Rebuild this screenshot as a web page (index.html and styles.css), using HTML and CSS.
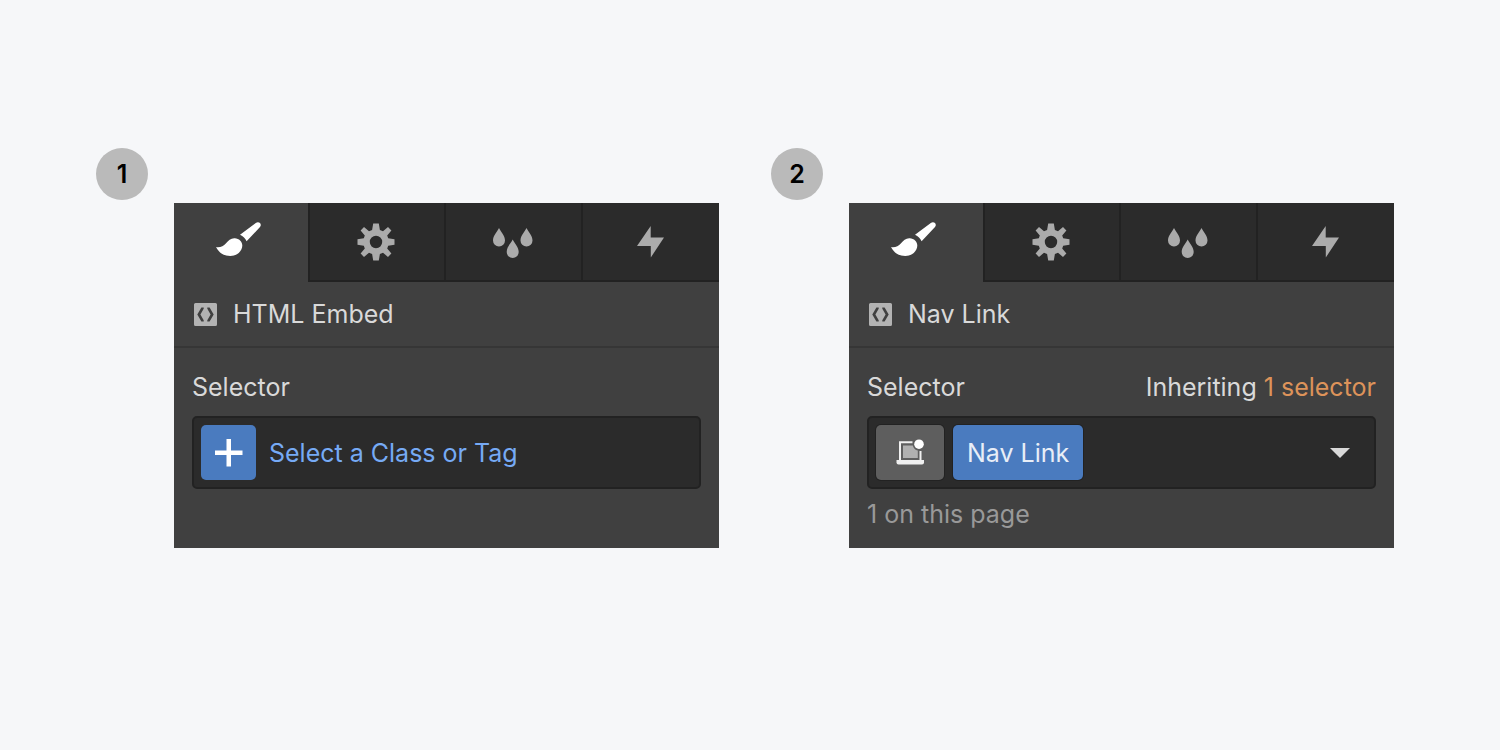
FILE: index.html
```html
<!DOCTYPE html>
<html lang="en">
<head>
<meta charset="utf-8">
<title>Style panel selectors</title>
<link rel="stylesheet" href="styles.css">
</head>
<body>
<svg class="sprite" aria-hidden="true">
  <symbol id="brush" viewBox="0 0 46 36">
    <path d="M1 25c4 .8 7.500-1 9.800-3.600 2.700-3 5.200-5.500 9-5.200 4.200.2 7.500 3.200 7.500 7.200 0 5.700-5.500 10.600-12 10.600-6.200 0-11.500-3.200-14.300-9z"/>
    <path d="M25 12.700 40.800 1c1.400-1.200 3.100-1.100 4.200.1 1.100 1.200 1 2.700 0 4L31.600 19.200c-1.300-2.900-3.400-5.100-6.600-6.500z"/>
  </symbol>
  <symbol id="gear" viewBox="-19 -19 38 38">
    <path fill-rule="evenodd" d="M-2.800-18.500h5.600L3.900-12 7-10.800l5-4.100 3.400 3.400-4.200 5L12.200-3.700l6.300.9v5.600l-6.300.9-1 2.800 4.200 5-3.400 3.400-5-4.100-3.100 1.200-1.100 6.500h-5.600l-1.100-6.500L-7 10.800l-5 4.100-3.400-3.400 4.200-5-1-2.800-6.300-.9v-5.600l6.300-.9 1-2.800-4.200-5 3.400-3.400 5 4.100 3.100-1.200zM6.200 0A6.200 6.200 0 1 0-6.200 0 6.200 6.200 0 1 0 6.200 0z"/>
  </symbol>
  <symbol id="drops" viewBox="0 -3 40 34">
    <path d="M6 0c2 4 6 7.500 6 12.500A6 6 0 0 1 0 12.500C0 7.500 4 4 6 0z"/>
    <path d="M33.500 0c2 4 6 7.500 6 12.500a6 6 0 0 1-12 0c0-5 4-8.500 6-12.500z"/>
    <path d="M19.700 11.500c2 4 6 7.500 6 12.500a6 6 0 0 1-12 0c0-5 4-8.500 6-12.500z"/>
  </symbol>
  <symbol id="bolt" viewBox="-1 -1 28 33">
    <path d="M13.700 0v11.500H27L13.800 31.500V20H0z"/>
  </symbol>
  <symbol id="embed" viewBox="0 0 23 23">
    <path fill-rule="evenodd" d="M1.500 0h20A1.500 1.500 0 0 1 23 1.500v20a1.500 1.500 0 0 1-1.500 1.500h-20A1.500 1.500 0 0 1 0 21.500v-20A1.500 1.500 0 0 1 1.500 0zM7.400 4.500 3.300 11.500l4.100 7h2.300v-1.300L6.400 11.500l3.300-5.700V4.500zM15.600 4.500h-2.300v1.300l3.300 5.700-3.300 5.700v1.300h2.300l4.100-7z"/>
  </symbol>
</svg>

<main class="board">
  <section class="step">
    <span class="badge">1</span>
    <div class="panel">
      <nav class="tabs">
        <button class="tab tab-active" aria-label="Style"><svg class="icon-brush"><use href="#brush"/></svg></button>
        <button class="tab" aria-label="Settings"><svg class="icon-gear"><use href="#gear"/></svg></button>
        <button class="tab" aria-label="Style manager"><svg class="icon-drops"><use href="#drops"/></svg></button>
        <button class="tab" aria-label="Interactions"><svg class="icon-bolt"><use href="#bolt"/></svg></button>
      </nav>
      <header class="element"><svg class="icon-embed"><use href="#embed"/></svg>HTML Embed</header>
      <div class="body">
        <div class="row"><label for="selector">Selector</label></div>
        <div class="field">
          <button class="add" aria-label="Add class"><svg class="icon-plus" viewBox="0 0 28 28"><path d="M0 11.500h11.500V0h4.500v11.500H27.500v4.500H16V27.500h-4.500V16H0z"/></svg></button>
          <input class="search" id="selector" type="text" placeholder="Select a Class or Tag">
        </div>
      </div>
    </div>
  </section>

  <section class="step">
    <span class="badge">2</span>
    <div class="panel">
      <nav class="tabs">
        <button class="tab tab-active" aria-label="Style"><svg class="icon-brush"><use href="#brush"/></svg></button>
        <button class="tab" aria-label="Settings"><svg class="icon-gear"><use href="#gear"/></svg></button>
        <button class="tab" aria-label="Style manager"><svg class="icon-drops"><use href="#drops"/></svg></button>
        <button class="tab" aria-label="Interactions"><svg class="icon-bolt"><use href="#bolt"/></svg></button>
      </nav>
      <header class="element"><svg class="icon-embed"><use href="#embed"/></svg>Nav Link</header>
      <div class="body">
        <div class="row"><span>Selector</span><span class="inherit">Inheriting <a class="inherit-link" href="#">1 selector</a></span></div>
        <div class="field">
          <button class="state" aria-label="Breakpoint"><svg class="icon-device" viewBox="0 0 28 28">
            <path class="screen" d="M7 6.500h9.800c.6 2.700 2.400 4.500 5 5V19H7z"/>
            <path class="frame" d="M16.500 3.200H4V21M24.500 12V21"/>
            <path class="base" d="M.5 21h27.500V23.500a2 2 0 0 1-2 2H2.500a2 2 0 0 1-2-2z"/>
            <circle class="dot" cx="23" cy="5.200" r="4.800"/>
          </svg></button>
          <button class="chip">Nav Link</button>
          <button class="toggle" aria-label="States"><svg class="icon-caret" viewBox="0 0 20 10"><path d="M0 0h20L10 10z"/></svg></button>
        </div>
        <p class="note">1 on this page</p>
      </div>
    </div>
  </section>
</main>
</body>
</html>
```
FILE: styles.css
```css
* { box-sizing: border-box; }

body {
  margin: 0;
  background: #f6f7f9;
  color: #d9d9d9;
  font: 400 25px/32px Inter, "Liberation Sans", sans-serif;
}

button, input { margin: 0; padding: 0; border: 0; font: inherit; color: inherit; }
svg { display: block; flex: none; fill: currentColor; }
.sprite { position: absolute; width: 0; height: 0; }

.board {
  display: grid;
  grid-template-columns: 1fr 1fr;
  gap: 52px;
  padding: 148px 106px 148px 96px;
}

.step { display: flex; flex-direction: column; gap: 3px; }

.badge {
  display: grid;
  place-items: center;
  width: 52px;
  height: 52px;
  border-radius: 50%;
  background: #bababa;
  color: #000;
  font-weight: 600;
}

.panel {
  flex: 1;
  margin-left: 78px;
  background: #404040;
}

.tabs { display: grid; grid-template-columns: 134fr 136fr 136fr 138fr; }

.tab {
  display: grid;
  place-items: center;
  height: 79px;
  padding-right: 2px;
  border-left: 2px solid #222;
  border-bottom: 2px solid #222;
  background: #2b2b2b;
  color: #ababab;
}

.tab-active {
  padding: 0 6px 6px 0;
  border: 0;
  background: #404040;
  color: #fff;
}

.icon-brush { width: 46px; height: 36px; }
.icon-gear { width: 38px; height: 38px; }
.icon-drops { width: 40px; height: 34px; }
.icon-bolt { width: 28px; height: 33px; }
.icon-embed { width: 23px; height: 23px; color: #b3b3b3; }
.icon-plus { width: 28px; height: 28px; }
.icon-device { width: 28px; height: 28px; }
.icon-caret { width: 20px; height: 10px; }

.element {
  display: flex;
  align-items: center;
  gap: 16px;
  height: 66px;
  padding: 0 20px;
  border-bottom: 2px solid #363636;
}

.body { padding: 23px 18px 18px; }
.row { display: flex; justify-content: space-between; margin-bottom: 13px; }
.inherit-link { color: #dd935a; text-decoration: none; }

.field {
  display: flex;
  align-items: center;
  gap: 9px;
  height: 73px;
  padding: 0 7px;
  border: 2px solid #222;
  border-radius: 5px;
  background: #2b2b2b;
}

.add, .state, .chip { height: 55px; border-radius: 5px; }

.add {
  display: grid;
  place-items: center;
  width: 55px;
  background: #4a7bbf;
  color: #fff;
}

.search {
  flex: 1;
  min-width: 0;
  padding-left: 4px;
  background: none;
  color: #76aaf5;
}
.search::placeholder { color: #76aaf5; opacity: 1; }

.state {
  display: grid;
  place-items: center;
  width: 68px;
  background: #5e5e5e;
  box-shadow: 0 0 0 1px #222;
}

.chip {
  padding: 0 14px;
  background: #4a7bbf;
  color: #e8eef7;
  box-shadow: 0 0 0 1px #222;
}

.toggle { margin-left: auto; padding: 17px; background: none; }

.screen { fill: #b0b0b0; }
.frame { fill: none; stroke: #f0f0f0; stroke-width: 2; }
.base { fill: #f0f0f0; }
.dot { fill: #fff; }

.note { margin: 9px 0 0; color: #999; }
```
